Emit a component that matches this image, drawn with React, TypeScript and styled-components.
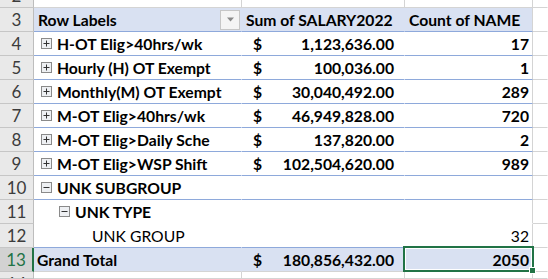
import * as React from 'react';
import styled, { createGlobalStyle, css } from 'styled-components';

const GlobalStyle = createGlobalStyle`
    html, body {
        margin: 0;
        padding: 0;
        background: #ffffff;
        overflow: hidden;
    }
    body {
        font-family: Lato, 'Liberation Sans', sans-serif;
        color: #000000;
    }
`;

const GRID = '#d4d4d4';
const PIVOT_LINE = '#8ea9db';
const PIVOT_FILL = '#d9e1f2';
const EXCEL_GREEN = '#217346';

const Sheet = styled.div`
    display: grid;
    grid-template-columns: 34px 208px 163px 128px 1fr;
    grid-template-rows: 8px repeat(11, 24px) 1fr;
    width: 548px;
    height: 279px;
    overflow: hidden;
    font-size: 15.7px;
`;

type HeaderProps = { $selected?: boolean; $clip?: 'top' | 'bottom' };

const RowHeader = styled.div<HeaderProps>`
    display: flex;
    justify-content: center;
    align-items: ${(p) => (p.$clip === 'top' ? 'flex-end' : p.$clip === 'bottom' ? 'flex-start' : 'center')};
    overflow: hidden;
    box-sizing: border-box;
    background: ${(p) => (p.$selected ? '#d2d2d2' : '#e9e9e9')};
    color: ${(p) => (p.$selected ? EXCEL_GREEN : '#3c3c3c')};
    border-bottom: 1px solid #c6c6c6;
    border-right: ${(p) => (p.$selected ? `2px solid ${EXCEL_GREEN}` : '1px solid #bdbdbd')};
    font-size: 17px;
    font-weight: 400;
`;

const RowNumber = styled.span`
    flex: none;
    display: block;
    height: 23px;
    line-height: 23px;
`;

type Line = 'grid' | 'pivot' | 'none';
type CellProps = {
    $fill?: boolean;
    $bold?: boolean;
    $line?: Line;
    $edge?: boolean;
    $align?: 'left' | 'right' | 'split';
    $pad?: string;
};

const lineColor = (l?: Line) => (l === 'pivot' ? PIVOT_LINE : l === 'none' ? 'transparent' : GRID);

const Cell = styled.div<CellProps>`
    position: relative;
    display: flex;
    align-items: center;
    box-sizing: border-box;
    white-space: nowrap;
    padding: ${(p) => p.$pad ?? '0 4px'};
    background: ${(p) => (p.$fill ? PIVOT_FILL : '#ffffff')};
    font-weight: ${(p) => (p.$bold ? 700 : 400)};
    border-bottom: 1px solid ${(p) => lineColor(p.$line)};
    border-right: 1px solid ${(p) => (p.$edge ? GRID : 'transparent')};
    ${(p) =>
        p.$align === 'right' &&
        css`
            justify-content: flex-end;
        `}
    ${(p) =>
        p.$align === 'split' &&
        css`
            justify-content: space-between;
        `}
`;

const SelectedCell = styled(Cell)`
    z-index: 2;

    &::after {
        content: '';
        position: absolute;
        left: -2px;
        top: -2px;
        right: -2px;
        bottom: -1px;
        border: 2px solid ${EXCEL_GREEN};
        box-shadow: inset 0 0 0 1px #ffffff;
        pointer-events: none;
    }
`;

const FillHandle = styled.span`
    position: absolute;
    right: -4px;
    bottom: -3px;
    width: 5px;
    height: 5px;
    background: ${EXCEL_GREEN};
    border: 1px solid #ffffff;
    z-index: 3;
`;

const FilterButton = styled.span`
    margin-left: auto;
    margin-right: -3px;
    width: 20px;
    height: 20px;
    box-sizing: border-box;
    display: flex;
    align-items: center;
    justify-content: center;
    border: 1px solid #c6c6c6;
    background: #f4f4f4;
`;

const Label = styled.span<{ $indent?: number }>`
    display: inline-flex;
    align-items: center;
    margin-left: ${(p) => p.$indent ?? 0}px;
`;

const Toggle = styled.svg`
    flex: none;
    margin-right: 5px;
`;

const ExpandBox = ({ open }: { open?: boolean }) => (
    <Toggle width="11" height="11" viewBox="0 0 11 11">
        <rect x="0.5" y="0.5" width="10" height="10" fill="#eef0f3" stroke="#8a8a8a" />
        <line x1="2.5" y1="5.5" x2="8.5" y2="5.5" stroke="#333" />
        {!open && <line x1="5.5" y1="2.5" x2="5.5" y2="8.5" stroke="#333" />}
    </Toggle>
);

const DropArrow = () => (
    <svg width="9" height="5" viewBox="0 0 9 5">
        <path d="M1 0.5 L8 0.5 L4.5 4.5 Z" fill="#8a8a8a" />
    </svg>
);

type Row = {
    n: number;
    label: string;
    sum?: string;
    count?: string;
    open?: boolean;
    depth: number;
    leaf?: boolean;
    line: Line;
};

const rows: Row[] = [
    { n: 4, label: 'H-OT Elig>40hrs/wk', sum: '1,123,636.00', count: '17', depth: 0, line: 'pivot' },
    { n: 5, label: 'Hourly (H) OT Exempt', sum: '100,036.00', count: '1', depth: 0, line: 'pivot' },
    { n: 6, label: 'Monthly(M) OT Exempt', sum: '30,040,492.00', count: '289', depth: 0, line: 'pivot' },
    { n: 7, label: 'M-OT Elig>40hrs/wk', sum: '46,949,828.00', count: '720', depth: 0, line: 'pivot' },
    { n: 8, label: 'M-OT Elig>Daily Sche', sum: '137,820.00', count: '2', depth: 0, line: 'pivot' },
    { n: 9, label: 'M-OT Elig>WSP Shift', sum: '102,504,620.00', count: '989', depth: 0, line: 'pivot' },
    { n: 10, label: 'UNK SUBGROUP', open: true, depth: 0, line: 'pivot' },
    { n: 11, label: 'UNK TYPE', open: true, depth: 1, line: 'none' },
    { n: 12, label: 'UNK GROUP', count: '32', depth: 2, leaf: true, line: 'pivot' },
];

export default function App() {
    return (
        <>
            <GlobalStyle />
            <Sheet>
                {/* row 2, scrolled mostly out of view */}
                <RowHeader $clip="top">
                    <RowNumber>2</RowNumber>
                </RowHeader>
                <Cell $edge />
                <Cell $edge />
                <Cell $edge />
                <Cell />

                {/* pivot header */}
                <RowHeader>
                    <RowNumber>3</RowNumber>
                </RowHeader>
                <Cell $fill $bold $line="pivot">
                    Row Labels
                    <FilterButton>
                        <DropArrow />
                    </FilterButton>
                </Cell>
                <Cell $fill $bold $line="pivot">
                    Sum of SALARY2022
                </Cell>
                <Cell $fill $bold $line="pivot" $edge>
                    Count of NAME
                </Cell>
                <Cell />

                {rows.map((r) => (
                    <React.Fragment key={r.n}>
                        <RowHeader>
                            <RowNumber>{r.n}</RowNumber>
                        </RowHeader>
                        <Cell $bold={!r.leaf} $line={r.line} $pad="0 4px 0 7px">
                            <Label $indent={r.leaf ? 51 : r.depth * 18}>
                                {!r.leaf && <ExpandBox open={r.open} />}
                                {r.label}
                            </Label>
                        </Cell>
                        <Cell $bold $line={r.line} $align="split" $pad="0 10px 0 11px">
                            {r.sum && (
                                <>
                                    <span>$</span>
                                    <span>{r.sum}</span>
                                </>
                            )}
                        </Cell>
                        <Cell $bold={!r.leaf} $line={r.line} $edge $align="right" $pad="0 3px 0 4px">
                            {r.count}
                        </Cell>
                        <Cell />
                    </React.Fragment>
                ))}

                {/* grand total */}
                <RowHeader $selected>
                    <RowNumber>13</RowNumber>
                </RowHeader>
                <Cell $fill $bold $line="grid" $pad="0 4px 0 3px">
                    Grand Total
                </Cell>
                <Cell $fill $bold $line="grid" $align="split" $pad="0 10px 0 11px">
                    <span>$</span>
                    <span>180,856,432.00</span>
                </Cell>
                <SelectedCell $fill $bold $line="grid" $edge $align="right" $pad="0 3px 0 4px">
                    2050
                    <FillHandle />
                </SelectedCell>
                <Cell />

                {/* row 14, partly below the fold */}
                <RowHeader $clip="bottom">
                    <RowNumber>14</RowNumber>
                </RowHeader>
                <Cell $edge />
                <Cell $edge />
                <Cell $edge />
                <Cell />
            </Sheet>
        </>
    );
}
